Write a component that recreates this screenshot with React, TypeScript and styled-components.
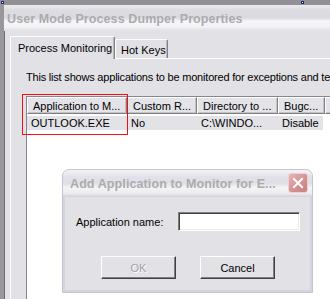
import styled, { createGlobalStyle } from "styled-components";

const GlobalStyle = createGlobalStyle`
  html, body {
    margin: 0;
    padding: 0;
    background: #e2e1e6;
  }
  body {
    font-family: "Liberation Sans", Arial, sans-serif;
    font-size: 11px;
  }
`;

const Screen = styled.div`
  position: relative;
  width: 330px;
  height: 299px;
  overflow: hidden;
`;

const Window = styled.div`
  display: flex;
  flex-direction: column;
  width: 340px;
  height: 299px;
  box-sizing: border-box;
  border-top: 5px solid #929296;
  border-left: 4px solid #98989c;
  box-shadow: inset 1px 1px 0 #6e6e74;
  background: #e2e1e6;
`;

const TitleBar = styled.div`
  height: 26px;
  flex-shrink: 0;
  display: flex;
  align-items: center;
  padding-left: 3px;
  background: linear-gradient(
    #ececf0 0%,
    #dcdce2 20%,
    #dadae0 50%,
    #f6f6f8 62%,
    #f2f2f4 85%,
    #dedee4 100%
  );
`;

const TitleText = styled.span`
  font-family: "Liberation Sans", Arial, sans-serif;
  font-weight: bold;
  font-size: 12.5px;
  letter-spacing: 0.1px;
  color: #ababaf;
  white-space: nowrap;
  overflow: hidden;
  padding-top: 1px;
`;

const Body = styled.div`
  flex: 1;
  display: flex;
  flex-direction: column;
  padding: 5px 0 0 6px;
  min-height: 0;
`;

const TabStrip = styled.div`
  display: flex;
  align-items: flex-end;
  height: 22px;
  flex-shrink: 0;
`;

const Tab = styled.div<{ $active?: boolean; $width: number }>`
  box-sizing: border-box;
  width: ${(p) => p.$width}px;
  height: ${(p) => (p.$active ? 23 : 19)}px;
  margin-bottom: ${(p) => (p.$active ? -1 : 0)}px;
  position: relative;
  z-index: ${(p) => (p.$active ? 1 : 0)};
  border-top: 1px solid #ffffff;
  border-left: 1px solid #ffffff;
  border-right: 1px solid #808080;
  box-shadow: inset -1px 0 0 #b8b8bc;
  border-radius: 2px 2px 0 0;
  background: #e2e1e6;
  color: #000;
  font-size: 11px;
  display: flex;
  align-items: ${(p) => (p.$active ? "flex-start" : "center")};
  padding: ${(p) => (p.$active ? "5px 0 0 7px" : "1px 0 0 5px")};
  white-space: nowrap;
`;

const TabPanel = styled.div`
  flex: 1;
  display: flex;
  flex-direction: column;
  border-top: 1px solid #ffffff;
  border-left: 1px solid #ffffff;
  padding: 11px 0 0 15px;
  min-height: 0;
`;

const Description = styled.div`
  font-size: 11px;
  line-height: 14px;
  letter-spacing: -0.2px;
  white-space: nowrap;
  color: #000;
`;

const ListView = styled.div`
  flex: 1;
  margin-top: 12px;
  background: #ffffff;
  border-top: 1px solid #828790;
  border-left: 1px solid #828790;
  display: flex;
  flex-direction: column;
`;

const Columns = "100px 70px 81px 47px 60px";

const HeaderRow = styled.div`
  display: grid;
  grid-template-columns: ${Columns};
  height: 17px;
`;

const HeaderCell = styled.div`
  box-sizing: border-box;
  background: #e4e3e8;
  border-top: 1px solid #ffffff;
  border-left: 1px solid #ffffff;
  border-right: 1px solid #808080;
  border-bottom: 1px solid #808080;
  box-shadow: inset -1px -1px 0 #c4c4c8;
  padding: 1px 0 0 5px;
  line-height: 14px;
  white-space: nowrap;
  overflow: hidden;
  color: #000;
`;

const DataRow = styled.div`
  display: grid;
  grid-template-columns: 100px 70px 81px 47px;
  margin-top: 2px;
  height: 14px;
  width: 296px;
  background: #e3e3e7;
`;

const DataCell = styled.div`
  padding-left: 4px;
  line-height: 14px;
  white-space: nowrap;
  color: #000;
`;

const Annotation = styled.div`
  position: absolute;
  left: 22px;
  top: 94px;
  width: 106px;
  height: 41px;
  box-sizing: border-box;
  border: 1.5px solid #f01010;
`;

const Handle = styled.span<{ $x: number }>`
  position: absolute;
  left: ${(p) => p.$x}px;
  top: 1px;
  width: 3px;
  height: 3px;
  background: #ffffff;
  border: 1px solid #1a2a70;
  box-sizing: border-box;
`;

const Dialog = styled.div`
  position: absolute;
  left: 62px;
  top: 169px;
  width: 251px;
  height: 124px;
  display: flex;
  flex-direction: column;
  border-radius: 7px 7px 0 0;
  border: 1px solid #c4c3d2;
  box-sizing: border-box;
  background: #e2e1e6;
  overflow: hidden;
`;

const DialogTitle = styled.div`
  height: 26px;
  flex-shrink: 0;
  display: flex;
  align-items: center;
  justify-content: space-between;
  gap: 4px;
  padding: 0 4px 0 7px;
  background: linear-gradient(
    #f4f4f7 0%,
    #e2e2e8 25%,
    #dedee4 50%,
    #f4f4f6 68%,
    #ececf0 90%,
    #d8d8e0 100%
  );
`;

const CloseButton = styled.div`
  width: 20px;
  height: 20px;
  flex-shrink: 0;
  box-sizing: border-box;
  border-radius: 3px;
  border: 1px solid #ead2d2;
  background: linear-gradient(135deg, #e8b4b4, #d48e8e 60%, #c88080);
  display: flex;
  align-items: center;
  justify-content: center;
`;

const DialogBody = styled.div`
  flex: 1;
  display: flex;
  flex-direction: column;
  border: 2px solid #d4d3e0;
  border-top: 1px solid #d4d3e0;
  padding: 15px 10px 0 11px;
`;

const FieldRow = styled.div`
  display: flex;
  align-items: center;
`;

const Label = styled.label`
  width: 102px;
  padding-top: 1px;
  color: #000;
  white-space: nowrap;
`;

const TextInput = styled.div`
  width: 122px;
  height: 19px;
  box-sizing: border-box;
  background: #ffffff;
  border-top: 1px solid #808080;
  border-left: 1px solid #808080;
  border-right: 1px solid #ffffff;
  border-bottom: 1px solid #ffffff;
  box-shadow: inset 1px 1px 0 #404040, inset -1px -1px 0 #ecebe0;
`;

const ButtonRow = styled.div`
  display: flex;
  justify-content: center;
  gap: 24px;
  margin-top: 25px;
`;

const Button = styled.button<{ $disabled?: boolean }>`
  width: 75px;
  height: 23px;
  box-sizing: border-box;
  font-family: "Liberation Sans", Arial, sans-serif;
  font-size: 11px;
  background: #e2e1e6;
  border-top: 1px solid #ffffff;
  border-left: 1px solid #ffffff;
  border-right: 1px solid #404040;
  border-bottom: 1px solid #404040;
  box-shadow: inset -1px -1px 0 #808080;
  color: ${(p) => (p.$disabled ? "#a0a0a4" : "#000")};
  text-shadow: ${(p) => (p.$disabled ? "1px 1px 0 #ffffff" : "none")};
  padding: 0;
`;

export default function App() {
  return (
    <Screen>
      <GlobalStyle />
      <Window>
        <TitleBar>
          <TitleText>User Mode Process Dumper Properties</TitleText>
        </TitleBar>
        <Body>
          <TabStrip>
            <Tab $active $width={105}>Process Monitoring</Tab>
            <Tab $width={53}>Hot Keys</Tab>
          </TabStrip>
          <TabPanel>
            <Description>
              This list shows applications to be monitored for exceptions and te
            </Description>
            <ListView>
              <HeaderRow>
                <HeaderCell>Application to M...</HeaderCell>
                <HeaderCell>Custom R...</HeaderCell>
                <HeaderCell>Directory to ...</HeaderCell>
                <HeaderCell>Bugc...</HeaderCell>
                <HeaderCell></HeaderCell>
              </HeaderRow>
              <DataRow>
                <DataCell>OUTLOOK.EXE</DataCell>
                <DataCell>No</DataCell>
                <DataCell>C:\WINDO...</DataCell>
                <DataCell>Disable</DataCell>
              </DataRow>
            </ListView>
          </TabPanel>
        </Body>
      </Window>

      <Handle $x={1} />
      <Handle $x={301} />
      <Annotation />

      <Dialog>
        <DialogTitle>
          <TitleText>Add Application to Monitor for E...</TitleText>
          <CloseButton>
            <svg width="12" height="12" viewBox="0 0 12 12">
              <path d="M2 2 L10 10 M10 2 L2 10" stroke="#ffffff" strokeWidth="2" strokeLinecap="square" />
            </svg>
          </CloseButton>
        </DialogTitle>
        <DialogBody>
          <FieldRow>
            <Label>Application name:</Label>
            <TextInput />
          </FieldRow>
          <ButtonRow>
            <Button $disabled>OK</Button>
            <Button>Cancel</Button>
          </ButtonRow>
        </DialogBody>
      </Dialog>
    </Screen>
  );
}
